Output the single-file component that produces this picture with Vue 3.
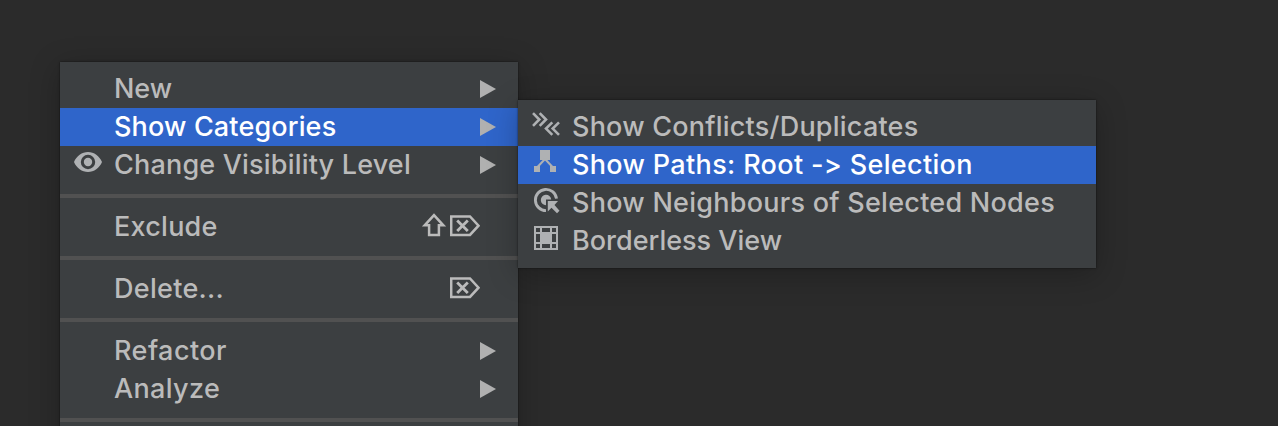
<script setup>
const menu = [
  { label: 'New', arrow: true, track: -0.1 },
  { label: 'Show Categories', arrow: true, active: true, track: 0.15 },
  { label: 'Change Visibility Level', arrow: true, icon: 'eye', track: 0.19 },
  { separator: true },
  { label: 'Exclude', keys: ['shift', 'delete'], track: 0.25 },
  { separator: true },
  { label: 'Delete...', keys: ['delete'], track: 0.3 },
  { separator: true },
  { label: 'Refactor', arrow: true, track: 0.45 },
  { label: 'Analyze', arrow: true, track: 0.35 },
  { separator: true }
]

const submenu = [
  { label: 'Show Conflicts/Duplicates', icon: 'conflicts', track: 0.22 },
  { label: 'Show Paths: Root -> Selection', icon: 'tree', active: true, track: 0.34 },
  { label: 'Show Neighbours of Selected Nodes', icon: 'target', track: 0.26 },
  { label: 'Borderless View', icon: 'grid', track: 0 }
]
</script>

<template>
  <main class="screen">
    <div class="popup main-menu">
      <template v-for="(item, i) in menu" :key="i">
        <div v-if="item.separator" class="separator"></div>
        <div v-else class="row" :class="{ active: item.active }">
          <span class="icon">
            <svg v-if="item.icon === 'eye'" width="32" height="38" viewBox="0 0 32 38">
              <path fill-rule="evenodd" d="M2 16C4.500 10 10 6 16 6s11.500 4 14 10c-2.500 6-8 10-14 10S4.500 22 2 16ZM16 8.800a7.200 7.200 0 1 0 0 14.400a7.200 7.200 0 1 0 0-14.400Z" />
              <circle cx="16" cy="16" r="4.200" />
            </svg>
          </span>
          <span class="label" :style="{ letterSpacing: item.track + 'px' }">{{ item.label }}</span>
          <span v-if="item.keys" class="keys">
            <template v-for="key in item.keys" :key="key">
              <svg v-if="key === 'shift'" class="key" width="28" height="38" viewBox="0 0 28 38">
                <path d="M14 7.200L23.300 17.300H18.900V26.900H9.100V17.300H4.700Z" />
              </svg>
              <svg v-else class="key" width="30" height="38" viewBox="0 0 30 38">
                <path d="M1.200 8.500H20L28.500 17.700L20 26.900H1.200Z" />
                <path class="cross" d="M7.200 12.400L17.800 23M17.800 12.400L7.200 23" />
              </svg>
            </template>
          </span>
          <svg v-if="item.arrow" class="arrow" width="16" height="18" viewBox="0 0 16 18">
            <path d="M0 0L16 9L0 18Z" />
          </svg>
        </div>
      </template>
    </div>

    <div class="popup submenu">
      <div v-for="item in submenu" :key="item.label" class="row" :class="{ active: item.active }">
        <span class="icon">
          <svg v-if="item.icon === 'conflicts'" width="32" height="38" viewBox="0 0 32 38">
            <path class="line" d="M3 5.200L9.300 11.500L3 17.800M9.700 5.200L16 11.500L9.700 17.800M22.300 14.300L16 20.600L22.300 26.900M29 14.300L22.700 20.600L29 26.900" />
          </svg>
          <svg v-else-if="item.icon === 'tree'" width="32" height="38" viewBox="0 0 32 38">
            <path d="M10 4h10v10H10zM4 20h6v6H4zM20 20h6v6h-6z" />
            <path class="thin" d="M7.500 21L15 13L22.500 21" />
          </svg>
          <svg v-else-if="item.icon === 'target'" width="32" height="38" viewBox="0 0 32 38">
            <path class="ring" d="M16 26.600A10.600 10.600 0 1 1 26.500 14.600" />
            <path d="M16 21.200A5.200 5.200 0 1 1 21.200 15.500L16 15.500Z" />
            <path d="M17.800 17H28L24.500 21L29.500 26.700L27 29.200L21.500 23.700L17.800 27.500Z" />
          </svg>
          <svg v-else width="32" height="38" viewBox="0 0 32 38">
            <path fill-rule="evenodd" d="M4 4h24v24H4zM6 6v4h4V6zM12 6v4h8V6zM22 6v4h4V6zM6 12v8h4v-8zM22 12v8h4v-8zM6 22v4h4v-4zM12 22v4h8v-4zM22 22v4h4v-4z" />
          </svg>
        </span>
        <span class="label" :style="{ letterSpacing: item.track + 'px' }">{{ item.label }}</span>
      </div>
    </div>
  </main>
</template>

<style>
body {
  margin: 0;
  background: #2b2b2b;
}
</style>

<style scoped>
.screen {
  display: flex;
  align-items: flex-start;
  box-sizing: border-box;
  width: 1278px;
  height: 426px;
  padding: 62px 0 0 60px;
  overflow: hidden;
  background: #2b2b2b;
  font-family: Inter, "Liberation Sans", sans-serif;
}

.popup {
  box-sizing: border-box;
  flex: none;
  padding: 8px 0;
  background: #3c3f41;
  color: #bbb;
  box-shadow: 0 0 2px rgba(0, 0, 0, 0.6), 0 6px 28px rgba(0, 0, 0, 0.25);
}

.main-menu {
  width: 458px;
  height: 400px;
}

.submenu {
  position: relative;
  width: 578px;
  margin-top: 38px;
}

.row {
  display: flex;
  height: 38px;
  box-sizing: border-box;
  padding: 0 22px 0 12px;
}

.row.active {
  background: #2f65ca;
  color: #fff;
}

.icon {
  flex: none;
  width: 32px;
  margin-right: 10px;
}

.label {
  flex: 1;
  font-size: 27px;
  font-weight: 500;
  font-feature-settings: "calt" 0;
  line-height: 38px;
  white-space: pre;
}

svg {
  display: block;
  fill: #afb1b3;
}

.arrow {
  flex: none;
  margin-top: 10px;
  fill: #b0b0b0;
}

.keys {
  display: flex;
  gap: 2px;
  margin-right: 16px;
}

.key {
  fill: none;
  stroke: #bbb;
  stroke-width: 2.5;
}

.cross {
  stroke-width: 2.8;
}

.line,
.thin,
.ring {
  fill: none;
  stroke: #afb1b3;
}

.line {
  stroke-width: 2.6;
}

.thin {
  stroke-width: 2;
}

.ring {
  stroke-width: 2.9;
}

.separator {
  height: 4px;
  margin: 10px 0;
  background: #515151;
}
</style>
